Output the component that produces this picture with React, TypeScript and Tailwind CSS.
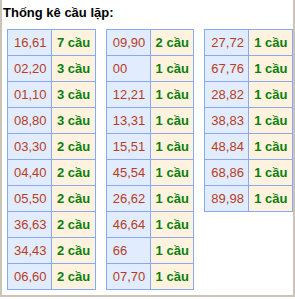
import React from "react";

type Row = [string, number];

const cols: Row[][] = [
    [
        ["16,61", 7],
        ["02,20", 3],
        ["01,10", 3],
        ["08,80", 3],
        ["03,30", 2],
        ["04,40", 2],
        ["05,50", 2],
        ["36,63", 2],
        ["34,43", 2],
        ["06,60", 2],
    ],
    [
        ["09,90", 2],
        ["00", 1],
        ["12,21", 1],
        ["13,31", 1],
        ["15,51", 1],
        ["45,54", 1],
        ["26,62", 1],
        ["46,64", 1],
        ["66", 1],
        ["07,70", 1],
    ],
    [
        ["27,72", 1],
        ["67,76", 1],
        ["28,82", 1],
        ["38,83", 1],
        ["48,84", 1],
        ["68,86", 1],
        ["89,98", 1],
    ],
];

function LoopTable({ rows }: { rows: Row[] }) {
    return (
        <table className="border-collapse border border-[#88aaf0]">
            <tbody>
                {rows.map(([pair, count]) => (
                    <tr key={pair}>
                        <td className="w-[44px] h-[26px] p-0 pl-[6px] border border-[#88aaf0] bg-[#e1edff] text-[#b83c1e]">
                            {pair}
                        </td>
                        <td className="w-[44px] h-[26px] p-0 pl-[5px] border border-[#88aaf0] bg-[#fff3e0] font-bold text-[#0a7f0a]">
                            {count} cầu
                        </td>
                    </tr>
                ))}
            </tbody>
        </table>
    );
}

export default function App() {
    return (
        <div className="w-[295px] h-[299px] bg-white">
            <div
                className="h-[297px] border-l-2 border-r-2 border-b-2 border-[#cbc3b8] text-[13px]"
                style={{ fontFamily: '"Liberation Sans", Arial, sans-serif' }}
            >
                <h1 className="pl-px pt-[5px] font-bold text-[13px] leading-[15px] text-black">
                    Thống kê cầu lặp:
                </h1>
                <div className="flex items-start gap-[10px] pl-[5px] mt-[9px]">
                    {cols.map((rows, i) => (
                        <LoopTable key={i} rows={rows} />
                    ))}
                </div>
            </div>
        </div>
    );
}
